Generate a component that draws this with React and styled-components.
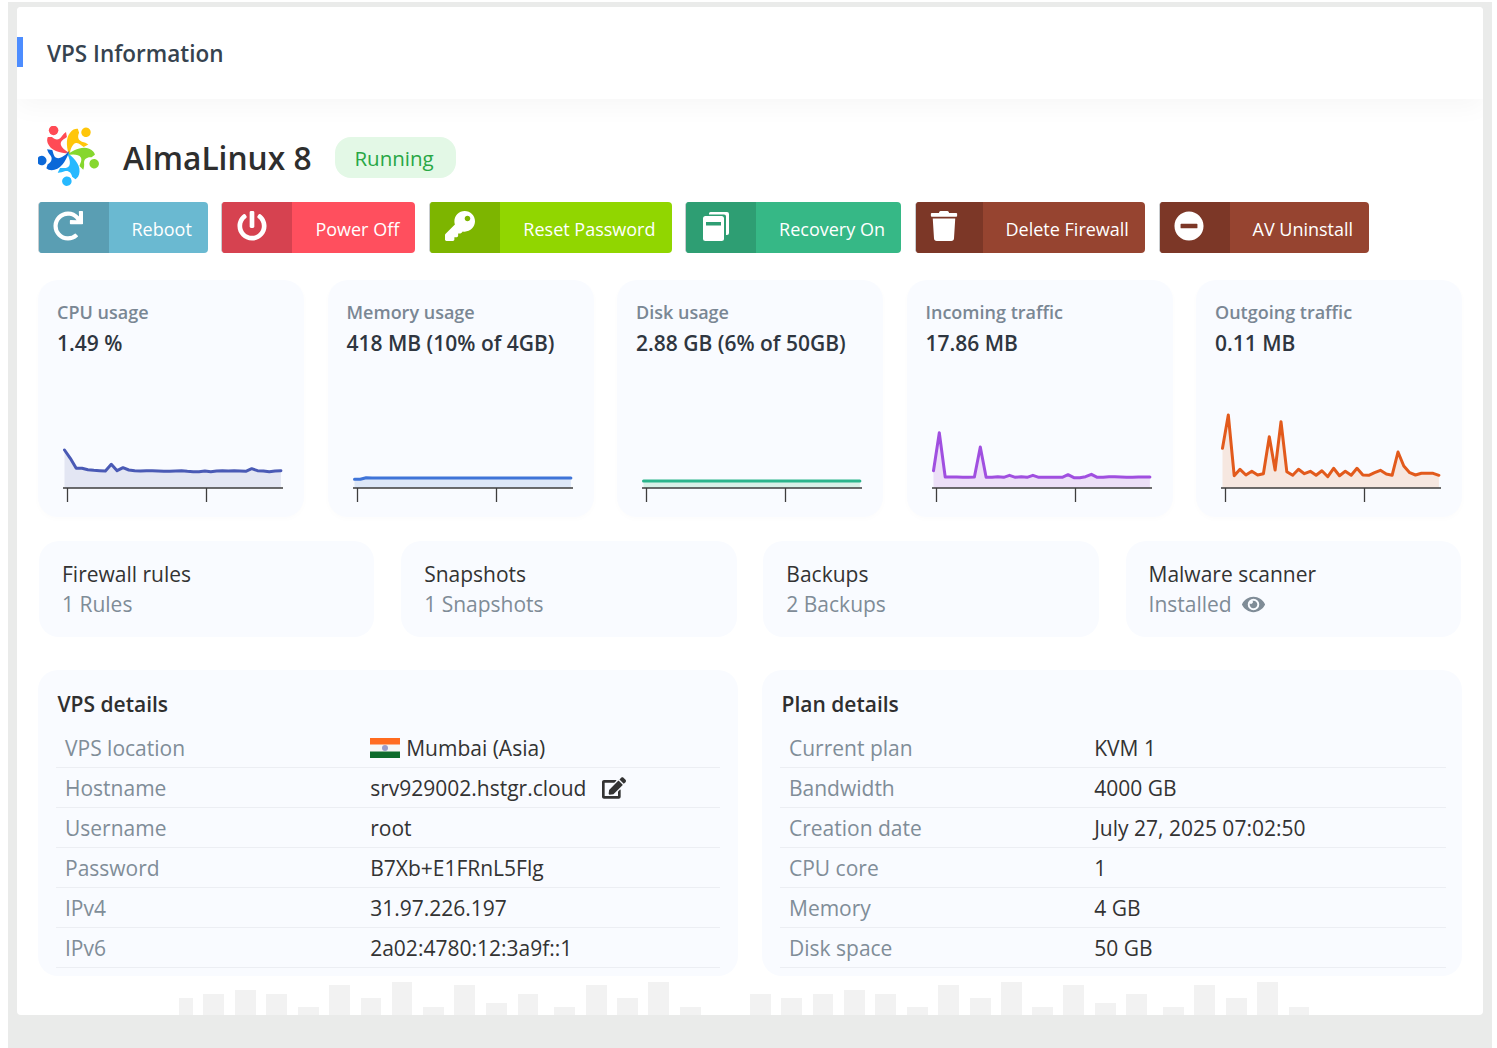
import React from 'react';
import styled, { createGlobalStyle } from 'styled-components';
import { FaRedo, FaPowerOff, FaKey, FaTrash, FaMinusCircle, FaEye, FaEdit } from 'react-icons/fa';

const GlobalStyle = createGlobalStyle`
    html, body { margin: 0; padding: 0; background: #fff; }
    body { font-family: "Open Sans", "Noto Sans", sans-serif; color: #333; }
    * { box-sizing: border-box; }
`;

const flat = (n, v) => Array(n).fill(v);

// chart values are pixels measured down from y=380 of the page, x step is 5.85px
const charts = [
    {
        color: '#4a5ab5', fill: '#e3e6f3',
        points: [70, 78.3, 88.3, 88.3, 89.7, 90.3, 90.7, 91, 84.3, 90.7, 87.7, 90, 90.7, 91, 90.7, 90.7, 91, 91.3, 91.3, 91, 90.7, 91.3, 91.7, 91.7, 91, 91.7, 91, 90.7, 91, 90.7, 91, 91.3, 88.7, 90.7, 91, 91.7, 91, 90.7],
    },
    {
        color: '#3f74d8', fill: '#dde7f8',
        points: [99.3, 99.3, 97.7, ...flat(35, 98)],
    },
    {
        color: '#2bb58c', fill: '#d8f1e8',
        points: flat(38, 101),
    },
    {
        color: '#a04fe0', fill: '#ecdff7',
        points: [90.7, 52.7, 97, 97, 97, 97.3, 97.3, 97, 67, 97.3, 97.3, 96.7, 97.3, 95.3, 97.3, 96.7, 97.3, 95.3, 97.3, 97.3, 97.3, 97.3, 97.3, 94.7, 97.7, 97.7, 96.7, 94.3, 97.3, 97.3, 96.7, 96.7, 97, 97.3, 97.3, 97, 97, 97],
    },
    {
        color: '#e25a1c', fill: '#f6e7e0',
        points: [68.3, 35, 95.7, 89.3, 95, 91.3, 95, 93.7, 56.7, 90, 41.7, 91.7, 95.3, 89.3, 93.7, 91.3, 95.3, 90.7, 96.7, 88.3, 95.7, 91.3, 95.3, 88.3, 95, 95.3, 92.7, 90.3, 94, 95.3, 72, 86, 92.7, 95, 93.3, 93.3, 93.3, 95.3],
    },
];

const stats = [
    { label: 'CPU usage', value: '1.49 %' },
    { label: 'Memory usage', value: '418 MB (10% of 4GB)' },
    { label: 'Disk usage', value: '2.88 GB (6% of 50GB)' },
    { label: 'Incoming traffic', value: '17.86 MB' },
    { label: 'Outgoing traffic', value: '0.11 MB' },
];

const vpsRows = [
    ['VPS location', 'location'],
    ['Hostname', 'hostname'],
    ['Username', 'root'],
    ['Password', 'B7Xb+E1FRnL5Flg'],
    ['IPv4', '31.97.226.197'],
    ['IPv6', '2a02:4780:12:3a9f::1'],
];

const planRows = [
    ['Current plan', 'KVM 1'],
    ['Bandwidth', '4000 GB'],
    ['Creation date', 'July 27, 2025 07:02:50'],
    ['CPU core', '1'],
    ['Memory', '4 GB'],
    ['Disk space', '50 GB'],
];

const leftBars = [[179, 14, 17], [203, 21, 21], [235, 21, 25], [266, 21, 21], [298, 21, 8], [329, 21, 30], [361, 20, 17], [392, 20, 33], [423, 21, 8], [454, 21, 30], [486, 21, 12], [518, 20, 21], [554, 21, 8], [586, 21, 30], [617, 21, 17], [648, 21, 33], [680, 21, 8]];
const rightBars = [[750, 21, 21], [781, 21, 17], [813, 20, 21], [844, 21, 25], [875, 21, 21], [907, 21, 8], [938, 21, 30], [970, 21, 17], [1001, 21, 33], [1032, 21, 8], [1063, 21, 30], [1095, 21, 12], [1126, 21, 21], [1163, 21, 8], [1194, 21, 30], [1226, 21, 17], [1257, 21, 33], [1289, 20, 8]];

const RecoveryIcon = () => (
    <svg width="30" height="30" viewBox="0 0 30 30">
        <path d="M8 2.500 Q8 1 9.500 1 H26 Q28 1 28 3 V22 Q28 24 26 24 H25 V5.500 Q25 3.500 23 3.500 H8 Z" fill="#fff" />
        <rect x="2" y="5" width="21" height="25" rx="2.500" fill="#fff" />
        <rect x="5" y="11" width="15" height="3.500" fill="#2e9e73" />
    </svg>
);

const Logo = () => {
    const colors = ['#ff4b55', '#ffc60a', '#86d72e', '#27b9ff', '#0b68d8'];
    return (
        <svg width="62" height="60" viewBox="-29.5 -26.7 60 58">
            {colors.map((c, i) => (
                <g key={c} transform={`rotate(${i * 72})`} fill={c}>
                    <circle cx="-14.4" cy="-22.5" r="4.600" />
                    <path d="M3 0 C-4 0 -15 -1 -19 -8 C-21 -11 -21 -14 -20 -16 L-16 -16 C-13 -13 -9 -13 -7 -16 C-6 -18 -4 -20 -2.400 -21 L-1.500 -16 C-4 -14 -7 -13 -7.500 -10 C-8 -6 -2 -2 3 0 Z" />
                </g>
            ))}
        </svg>
    );
};

const IndiaFlag = () => (
    <FlagSvg width="30" height="20" viewBox="0 0 30 20">
        <rect width="30" height="7" fill="#ff6b1f" />
        <rect y="6.500" width="30" height="7" fill="#f6f6f4" />
        <rect y="13.500" width="30" height="6.500" fill="#0e6b2c" />
        <circle cx="15" cy="10" r="3" fill="#9a9ccb" />
    </FlagSvg>
);

const Chart = ({ color, fill, points }) => {
    const xs = points.map((_, i) => 1.5 + i * 5.85);
    const line = points.map((y, i) => `${xs[i].toFixed(1)},${y}`).join(' ');
    const area = `1.5,108 ${line} ${xs[xs.length - 1].toFixed(1)},108`;
    return (
        <ChartSvg width="222" height="123" viewBox="0 0 222 123">
            <polygon points={area} fill={fill} />
            <polyline points={line} fill="none" stroke={color} strokeWidth="3" strokeLinejoin="round" strokeLinecap="round" />
            <line x1="0" y1="108" x2="220" y2="108" stroke="#3d3d3d" strokeWidth="1.300" />
            <line x1="4.500" y1="108" x2="4.500" y2="122" stroke="#3d3d3d" strokeWidth="1.300" />
            <line x1="143.500" y1="108" x2="143.500" y2="122" stroke="#3d3d3d" strokeWidth="1.300" />
        </ChartSvg>
    );
};

const ActionButton = ({ dark, light, iconSize = 30, iconWidth = 71, icon, children }) => (
    <Action $light={light}>
        <ActionIcon $dark={dark} $width={iconWidth} $size={iconSize}>{icon}</ActionIcon>
        <ActionLabel>{children}</ActionLabel>
    </Action>
);

const DetailsCard = ({ title, rows, renderValue }) => (
    <Details>
        <DetailsTitle>{title}</DetailsTitle>
        {rows.map(([label, value]) => (
            <Row key={label}>
                <RowLabel>{label}</RowLabel>
                <RowValue>{renderValue ? renderValue(value) : value}</RowValue>
            </Row>
        ))}
    </Details>
);

const renderVpsValue = (value) => {
    if (value === 'location') {
        return <><IndiaFlag />Mumbai (Asia)</>;
    }
    if (value === 'hostname') {
        return <>srv929002.hstgr.cloud<EditIcon /></>;
    }
    return value;
};

const App = () => (
    <Page>
        <GlobalStyle />
        <Card>
            <BackBars width="1466" height="40" viewBox="17 975 1466 40">
                {[...leftBars, ...rightBars].map(([x, w, h]) => (
                    <rect key={x} x={x} y={1015 - h} width={w} height={h} fill="#f2f2f2" />
                ))}
            </BackBars>
            <Header>
                <HeaderTitle>VPS Information</HeaderTitle>
            </Header>
            <Body>
                <TitleRow>
                    <Logo />
                    <OsName>AlmaLinux 8</OsName>
                    <Status>Running</Status>
                </TitleRow>
                <Actions>
                    <ActionButton dark="#5a9eb3" light="#6ab9d1" icon={<FaRedo />}>Reboot</ActionButton>
                    <ActionButton dark="#d64250" light="#ff4f5e" icon={<FaPowerOff />}>Power Off</ActionButton>
                    <ActionButton dark="#7db500" light="#91d600" iconWidth={71.5} icon={<FaKey />}>Reset Password</ActionButton>
                    <ActionButton dark="#2e9e73" light="#36b886" icon={<RecoveryIcon />}>Recovery On</ActionButton>
                    <ActionButton dark="#7c3727" light="#964430" iconWidth={68} icon={<FaTrash />}>Delete Firewall</ActionButton>
                    <ActionButton dark="#7c3727" light="#964430" icon={<FaMinusCircle />}>AV Uninstall</ActionButton>
                </Actions>
                <StatGrid>
                    {stats.map((s, i) => (
                        <StatCard key={s.label}>
                            <StatLabel>{s.label}</StatLabel>
                            <StatValue>{s.value}</StatValue>
                            <Chart {...charts[i]} />
                        </StatCard>
                    ))}
                </StatGrid>
                <InfoGrid>
                    <InfoCard>
                        <InfoTitle>Firewall rules</InfoTitle>
                        <InfoSub>1 Rules</InfoSub>
                    </InfoCard>
                    <InfoCard>
                        <InfoTitle>Snapshots</InfoTitle>
                        <InfoSub>1 Snapshots</InfoSub>
                    </InfoCard>
                    <InfoCard>
                        <InfoTitle>Backups</InfoTitle>
                        <InfoSub>2 Backups</InfoSub>
                    </InfoCard>
                    <InfoCard>
                        <InfoTitle>Malware scanner</InfoTitle>
                        <InfoSub>Installed<EyeIcon /></InfoSub>
                    </InfoCard>
                </InfoGrid>
                <DetailsGrid>
                    <DetailsCard title="VPS details" rows={vpsRows} renderValue={renderVpsValue} />
                    <DetailsCard title="Plan details" rows={planRows} />
                </DetailsGrid>
            </Body>
        </Card>
    </Page>
);

const Page = styled.div`
    margin: 2px 5px 0 8px;
    padding: 5px 9px 33px;
    height: 1046px;
    background-color: #eaebea;
`;

const Card = styled.div`
    position: relative;
    height: 1008px;
    background-color: #fff;
    border-radius: 4px;
    overflow: hidden;
`;

const BackBars = styled.svg`
    position: absolute;
    left: 0;
    bottom: 0;
`;

const Header = styled.div`
    height: 92px;
    padding-bottom: 2px;
    display: flex;
    align-items: center;
    background-color: #fff;
    box-shadow: 0 8px 24px rgba(0, 0, 0, 0.035);
`;

const HeaderTitle = styled.h1`
    margin: 0;
    padding-left: 24px;
    height: 30px;
    border-left: 6px solid #4d8dff;
    font-size: 22.500px;
    line-height: 34px;
    font-weight: 600;
    color: #36434f;
`;

const Body = styled.div`
    position: relative;
    padding: 27px 21px 0;
`;

const TitleRow = styled.div`
    display: flex;
    align-items: center;
    height: 60px;
`;

const OsName = styled.div`
    margin: 2px 0 0 23px;
    font-size: 31.700px;
    font-weight: 600;
    color: #2e2e2e;
`;

const Status = styled.div`
    margin: 3px 0 0 23px;
    width: 121px;
    height: 41px;
    padding-right: 2px;
    display: flex;
    align-items: center;
    justify-content: center;
    border-radius: 16px;
    background-color: #e3f8e6;
    color: #28a745;
    font-size: 20.500px;
`;

const Actions = styled.div`
    display: flex;
    gap: 13.600px;
    margin: 16px 0 0 -0.500px;
`;

const Action = styled.div`
    display: flex;
    height: 51px;
    border-left: 1.500px solid #c9cdd0;
    border-radius: 4px;
    overflow: hidden;
    background-color: ${(props) => props.$light};
    color: #fff;
`;

const ActionIcon = styled.div`
    width: ${(props) => props.$width - 1}px;
    display: flex;
    align-items: center;
    justify-content: center;
    padding: 0 11px 4px 0;
    background-color: ${(props) => props.$dark};
    font-size: ${(props) => props.$size}px;
`;

const ActionLabel = styled.div`
    display: flex;
    align-items: center;
    padding: 3px 16px 0 23px;
    font-size: 18px;
`;

const StatGrid = styled.div`
    display: grid;
    grid-template-columns: repeat(5, 266px);
    justify-content: space-between;
    margin-top: 27px;
`;

const StatCard = styled.div`
    height: 237px;
    padding: 19px 19px 0;
    display: flex;
    flex-direction: column;
    background-color: #f9fbff;
    border-radius: 20px;
    box-shadow: 0 2px 6px rgba(0, 0, 0, 0.015);
`;

const StatLabel = styled.div`
    font-size: 18px;
    line-height: 26px;
    font-weight: 600;
    color: #7a8794;
`;

const StatValue = styled.div`
    margin-top: 3px;
    font-size: 21px;
    line-height: 30px;
    font-weight: 600;
    color: #2f3640;
`;

const ChartSvg = styled.svg`
    display: block;
    margin: 22px 0 0 6px;
`;

const InfoGrid = styled.div`
    display: grid;
    grid-template-columns: repeat(4, 1fr);
    gap: 26.700px;
    margin-top: 24px;
    padding: 0 1px;
`;

const InfoCard = styled.div`
    height: 96px;
    padding: 18px 23px 0;
    background-color: #f9fbff;
    border-radius: 20px;
`;

const InfoTitle = styled.div`
    font-size: 21px;
    line-height: 30px;
    color: #333;
`;

const InfoSub = styled.div`
    display: flex;
    align-items: center;
    font-size: 21px;
    line-height: 30px;
    color: #7f8c97;
`;

const EyeIcon = styled(FaEye)`
    margin-left: 10px;
    font-size: 23px;
    color: #7f8c97;
`;

const DetailsGrid = styled.div`
    display: grid;
    grid-template-columns: repeat(2, 700px);
    justify-content: space-between;
    margin-top: 33px;
`;

const Details = styled.div`
    height: 306px;
    padding: 19px 18px 0;
    background-color: #f9fbff;
    border-radius: 20px;

    &:last-child {
        padding-right: 16px;
    }
`;

const DetailsTitle = styled.div`
    margin: 0 0 9px 1.500px;
    height: 30px;
    font-size: 21px;
    line-height: 30px;
    font-weight: 600;
    color: #2f2f2f;
`;

const Row = styled.div`
    display: flex;
    align-items: center;
    height: 40px;
    border-bottom: 1.500px solid #eceef3;
`;

const RowLabel = styled.div`
    width: 314.200px;
    padding-left: 9px;
    font-size: 21px;
    color: #808d98;
`;

const RowValue = styled.div`
    display: flex;
    align-items: center;
    font-size: 21px;
    color: #333;
`;

const FlagSvg = styled.svg`
    margin-right: 6px;
`;

const EditIcon = styled(FaEdit)`
    margin-left: 16px;
    font-size: 24px;
    color: #333;
`;

export default App;
